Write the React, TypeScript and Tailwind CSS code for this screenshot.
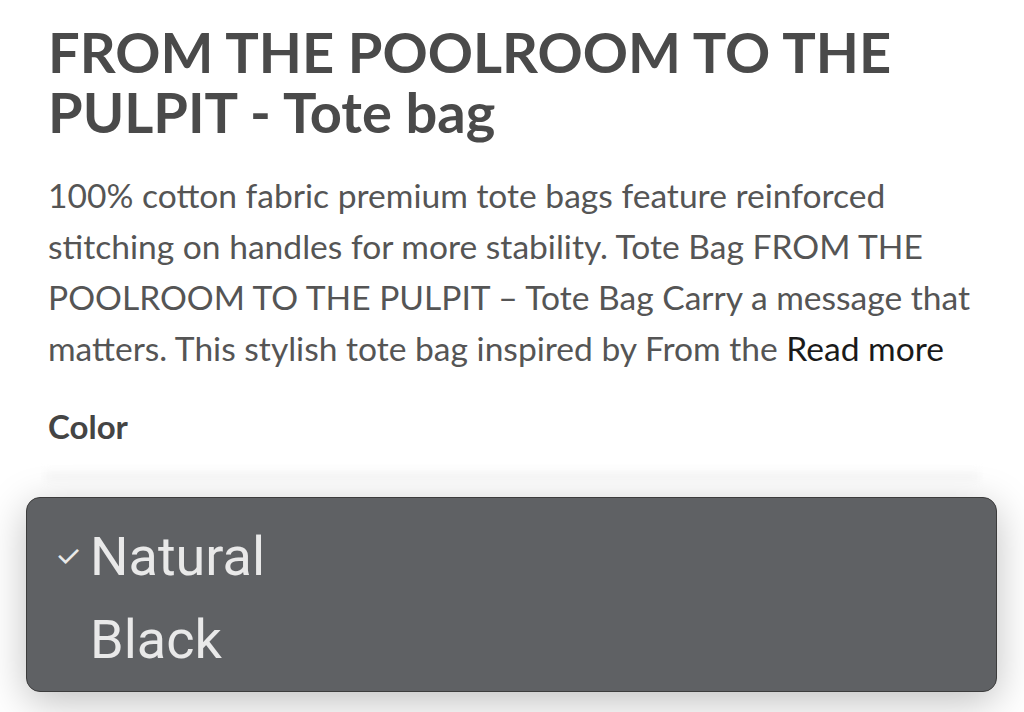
import React from "react";

export default function App() {
  return (
    <div className="relative w-[1024px] h-[712px] overflow-hidden bg-white font-['Lato','Liberation_Sans',sans-serif]">
      <div className="pl-12 pr-[26px] pt-[22px]">
        <h1 className="text-[56px] leading-[60px] font-bold text-[#4a4a4a]">
          FROM THE POOLROOM TO THE PULPIT - Tote bag
        </h1>
        <p className="mt-[28px] text-[33.6px] leading-[51px] text-[#555555]">
          100% cotton fabric premium tote bags feature reinforced stitching on handles for more stability. Tote Bag FROM THE POOLROOM TO THE PULPIT – Tote Bag Carry a message that matters. This stylish tote bag inspired by From the <span className="text-[#1a1a1a]">Read more</span>
        </p>
        <div className="mt-[32px] text-[33px] leading-[40px] font-bold text-[#444444]">Color</div>
      </div>
      <div className="mx-[44px] mt-[22px] h-[16px] bg-gradient-to-b from-white via-[#f7f7f7] to-white blur-[3px]" />
      <div className="absolute left-[26px] top-[497px] w-[971px] h-[195px] rounded-[14px] border border-[#3c3c3c] bg-[#5f6164] shadow-[0_10px_40px_rgba(0,0,0,0.25)] font-['Roboto','Inter',sans-serif] text-[#e9e9e9]">
        <div className="flex flex-col pt-[17px]">
          <div className="flex items-center h-[83px]">
            <span className="w-[63px] pl-[28px] text-[30px] leading-none">✓</span>
            <span className="text-[54px] leading-none">Natural</span>
          </div>
          <div className="flex items-center h-[83px]">
            <span className="w-[63px]" />
            <span className="text-[54px] leading-none">Black</span>
          </div>
        </div>
      </div>
    </div>
  );
}
